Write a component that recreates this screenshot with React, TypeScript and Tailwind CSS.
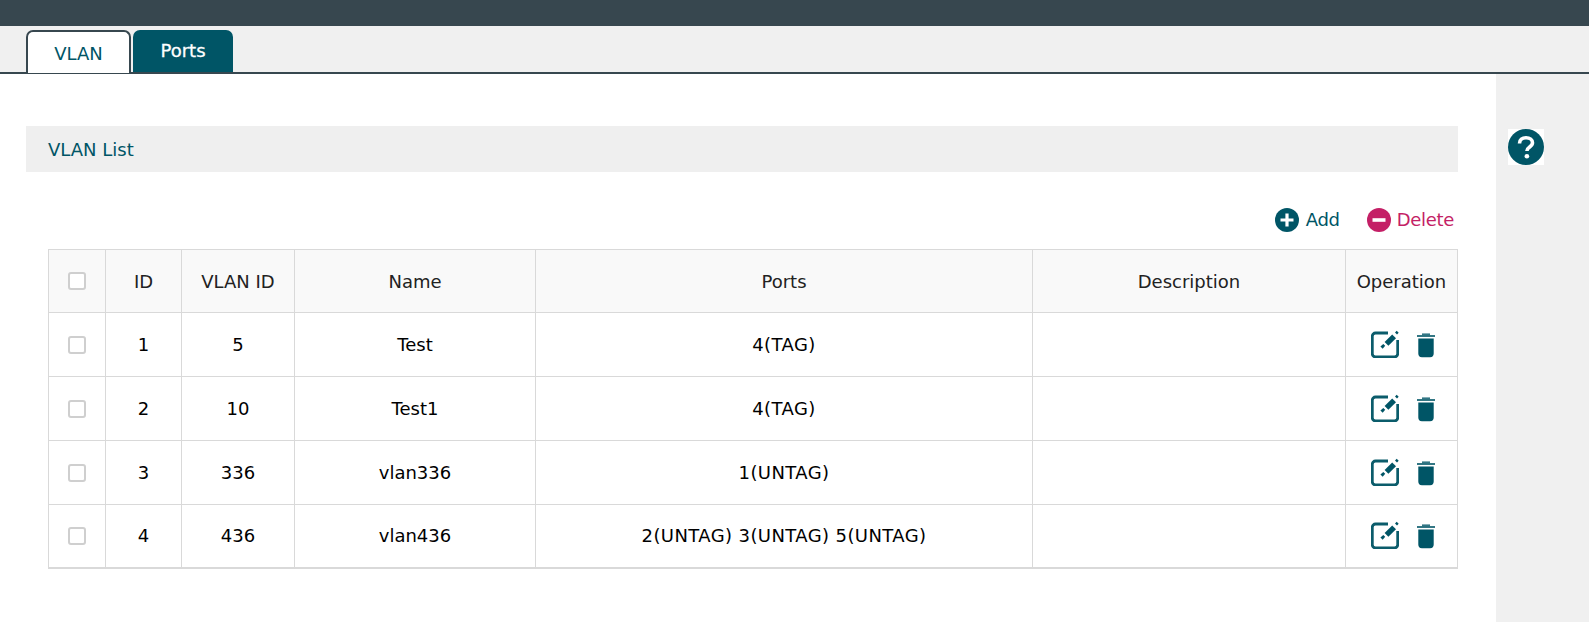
import React from "react";

const rows = [
  { id: "1", vid: "5", name: "Test", ports: "4(TAG)", h: "h-[64px]" },
  { id: "2", vid: "10", name: "Test1", ports: "4(TAG)", h: "h-[64px]" },
  { id: "3", vid: "336", name: "vlan336", ports: "1(UNTAG)", h: "h-[64px]" },
  { id: "4", vid: "436", name: "vlan436", ports: "2(UNTAG) 3(UNTAG) 5(UNTAG)", h: "h-[63px]" },
];

const Check = () => (
  <span className="block mx-auto w-[18px] h-[18px] bg-white border-2 border-[#cfcfcf] rounded-[3px]" />
);

const Edit = () => (
  <svg width="28" height="28" viewBox="0 0 28 28" fill="none">
    <path d="M17 3H4.5a3.2 3.2 0 0 0-3.2 3.2v17.6a3.2 3.2 0 0 0 3.2 3.2h19a3.2 3.2 0 0 0 3.2-3.2V10" stroke="#0b5c6b" strokeWidth="2.8" />
    <path d="M13.6 12l7.6-7.6 3.8 3.8-7.6 7.6z" fill="#005566" />
    <path d="M9.4 16.4l2.9-2.5 1.9 1.9-2.5 2.9z" fill="#005566" />
    <path d="M24 2.4l1.7-1.7 2 2-1.7 1.7z" fill="#005566" />
  </svg>
);

const Trash = () => (
  <svg width="18" height="25" viewBox="0 0 18 25" fill="none">
    <path d="M0 2.2h18v1.6H0z" fill="#005566" />
    <path d="M5 .4h8v1.8H5z" fill="#005566" opacity="0.8" />
    <path d="M1.3 5.4h15.4v15.2a3.6 3.6 0 0 1-3.6 3.6H4.9a3.6 3.6 0 0 1-3.6-3.6z" fill="#005566" />
  </svg>
);

const cell = "border border-[#d9d9d9] p-0 text-center align-middle font-normal";
const head = "border border-[#d9d9d9] p-0 pt-[2px] text-center align-middle font-normal";

export default function App() {
  return (
    <div className="h-[622px] overflow-hidden bg-white flex flex-col text-[18px] leading-none font-['DejaVu_Sans','Verdana',sans-serif]">
      <div className="h-[26px] bg-[#37474f] shrink-0" />
      <div className="h-[48px] shrink-0 bg-[#f0f0f0] border-b-2 border-[#37474f] flex items-start pl-[26px] pt-[4px] gap-[2px]">
        <div className="w-[105px] h-[43px] bg-white border-2 border-b-0 border-[#37474f] rounded-t-[7px] flex items-center justify-center text-[#005566] pt-[2px]">
          VLAN
        </div>
        <div className="w-[100px] h-[42px] bg-[#005566] rounded-t-[7px] flex items-center justify-center text-white [-webkit-text-stroke:0.3px_white]">
          Ports
        </div>
      </div>
      <div className="flex flex-1">
        <div className="w-[1496px] pl-[26px] pr-[38px] pt-[52px]">
          <div className="h-[46px] bg-[#efefef] flex items-center pl-[22px] pt-[2px] text-[#005566]">VLAN List</div>
          <div className="flex justify-end items-center h-[24px] mt-[36px] pr-[4px] tracking-[-0.3px]">
            <svg width="24" height="24" viewBox="0 0 24 24" className="mr-[7px]">
              <circle cx="12" cy="12" r="12" fill="#005566" />
              <path d="M12 5.5v13M5.5 12h13" stroke="#fff" strokeWidth="3.2" />
            </svg>
            <span className="text-[#005566]">Add</span>
            <svg width="24" height="24" viewBox="0 0 24 24" className="ml-[27px] mr-[6px]">
              <circle cx="12" cy="12" r="12" fill="#c41f66" />
              <path d="M5.5 12h13" stroke="#fff" strokeWidth="3.6" />
            </svg>
            <span className="text-[#c41f66]">Delete</span>
          </div>
          <table className="ml-[22px] mt-[17px] w-[1409px] table-fixed border-collapse border-b-2 border-b-[#d9d9d9] text-black">
            <colgroup>
              <col className="w-[57px]" />
              <col className="w-[76px]" />
              <col className="w-[113px]" />
              <col className="w-[241px]" />
              <col className="w-[497px]" />
              <col className="w-[313px]" />
              <col className="w-[112px]" />
            </colgroup>
            <thead>
              <tr className="h-[63px] bg-[#f9f9f9] text-[#222]">
                <th className={cell}><Check /></th>
                <th className={head}>ID</th>
                <th className={head}>VLAN ID</th>
                <th className={head}>Name</th>
                <th className={head}>Ports</th>
                <th className={head}>Description</th>
                <th className={head}>Operation</th>
              </tr>
            </thead>
            <tbody>
              {rows.map((r) => (
                <tr key={r.id} className={r.h}>
                  <td className={cell}><Check /></td>
                  <td className={cell}>{r.id}</td>
                  <td className={cell}>{r.vid}</td>
                  <td className={cell}>{r.name}</td>
                  <td className={`${cell} tracking-[0.4px]`}>{r.ports}</td>
                  <td className={cell}></td>
                  <td className={cell}>
                    <div className="flex items-end justify-center gap-[18px] pl-[2px] pb-[2px]">
                      <Edit />
                      <Trash />
                    </div>
                  </td>
                </tr>
              ))}
            </tbody>
          </table>
        </div>
        <div className="flex-1 bg-[#f0f0f0] pl-[12px] pt-[55px]">
          <svg width="36" height="36" viewBox="0 0 36 36" className="bg-white">
            <circle cx="18" cy="18" r="18" fill="#005566" />
            <path d="M11.5 14.5c0-3.8 2.8-5.7 6.5-5.7 3.9 0 6.5 2 6.5 5 0 4.2-5.6 4.2-5.6 8.2" fill="none" stroke="#fff" strokeWidth="3.6" />
            <circle cx="18.9" cy="27.2" r="2.3" fill="#fff" />
          </svg>
        </div>
      </div>
    </div>
  );
}
